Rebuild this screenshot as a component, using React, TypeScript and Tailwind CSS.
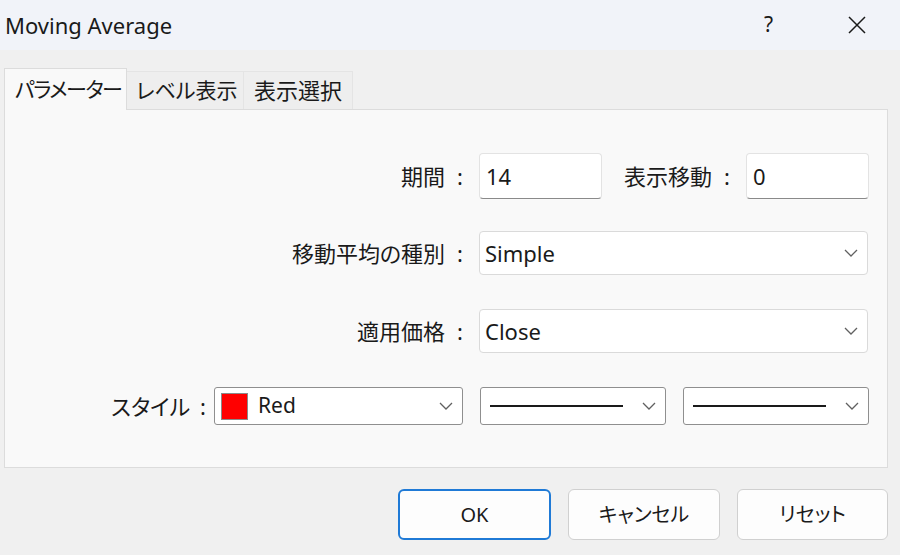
import React from "react";

function Chevron() {
  return (
    <svg width="14" height="8" viewBox="0 0 14 8" className="shrink-0">
      <path d="M1 1 L7 7 L13 1" fill="none" stroke="#606060" strokeWidth="1.3" />
    </svg>
  );
}

function TextBox({ value }: { value: string }) {
  return (
    <div className="w-[123px] h-[46px] bg-white border border-[#e3e3e3] border-b-[#8a8a8a] rounded-[4px] flex items-center pl-[6px] text-[22px] text-[#1a1a1a] shrink-0">
      {value}
    </div>
  );
}

function Select({ value }: { value: string }) {
  return (
    <div className="w-[389px] h-[44px] bg-white border border-[#dadada] rounded-[4px] flex items-center justify-between pl-[5px] pr-[9px] text-[22px] text-[#1a1a1a] shrink-0">
      <span>{value}</span>
      <Chevron />
    </div>
  );
}

function Colon() {
  return <span className="ml-[12px] mr-[16px]">:</span>;
}

function RowLabel({ children }: { children: React.ReactNode }) {
  return (
    <div className="w-[474px] text-right text-[22px] text-[#1a1a1a] whitespace-nowrap shrink-0">
      {children}
      <Colon />
    </div>
  );
}

export default function App() {
  return (
    <div className="w-[900px] h-[555px] bg-[#f0f0f0] flex flex-col overflow-hidden font-['Noto_Sans','Noto_Sans_CJK_JP',sans-serif] [font-feature-settings:'palt']">
      {/* title bar */}
      <div className="h-[50px] bg-[#f1f3f9] flex items-center shrink-0">
        <span className="ml-[5px] text-[22px] text-[#1a1a1a] flex-1">Moving Average</span>
        <span className="text-[21px] text-[#1a1a1a] mr-[74px]">?</span>
        <svg width="20" height="20" viewBox="0 0 20 20" className="mr-[33px]">
          <path d="M2 2 L18 18 M18 2 L2 18" stroke="#1a1a1a" strokeWidth="1.5" />
        </svg>
      </div>

      {/* tabs */}
      <div className="flex items-end pl-[4px] mt-[18px] h-[41px] shrink-0 relative z-10">
        <div className="w-[123px] h-[42px] bg-[#f9f9f9] border border-[#dcdcdc] border-b-0 flex items-center pl-[10px] text-[21px] tracking-[-1.5px] text-[#1a1a1a] whitespace-nowrap -mb-[1px]">
          パラメーター
        </div>
        <div className="w-[117px] h-[38px] bg-[#eeeeee] border border-[#e4e4e4] border-l-0 border-b-0 flex items-center pl-[9px] text-[21px] text-[#1a1a1a] whitespace-nowrap">
          レベル表示
        </div>
        <div className="w-[109px] h-[38px] bg-[#eeeeee] border border-[#e4e4e4] border-l-0 border-b-0 flex items-center pl-[10px] text-[22px] text-[#1a1a1a] whitespace-nowrap">
          表示選択
        </div>
      </div>

      {/* panel */}
      <div className="ml-[4px] w-[884px] h-[359px] bg-[#f9f9f9] border border-[#dcdcdc] shrink-0 flex flex-col pt-[43px] pr-[18px]">
        <div className="flex items-center">
          <RowLabel>期間</RowLabel>
          <TextBox value="14" />
          <div className="flex-1 text-right text-[22px] text-[#1a1a1a] whitespace-nowrap">
            表示移動
            <Colon />
          </div>
          <TextBox value="0" />
        </div>

        <div className="flex items-center mt-[32px]">
          <RowLabel>移動平均の種別</RowLabel>
          <Select value="Simple" />
        </div>

        <div className="flex items-center mt-[34px]">
          <RowLabel>適用価格</RowLabel>
          <Select value="Close" />
        </div>

        <div className="flex items-center justify-end mt-[34px]">
          <span className="text-[22px] text-[#1a1a1a] whitespace-nowrap">
            スタイル<span className="ml-[10px] mr-[8px]">:</span>
          </span>
          <div className="w-[249px] h-[38px] bg-white border border-[#8f8f8f] rounded-[3px] flex items-center pl-[6px] pr-[9px]">
            <div className="w-[27px] h-[27px] bg-[#ff0000] border border-[#8a8a8a] shrink-0" />
            <span className="ml-[10px] text-[21px] text-[#1a1a1a] flex-1">Red</span>
            <Chevron />
          </div>
          <div className="ml-[17px] w-[186px] h-[38px] bg-white border border-[#8f8f8f] rounded-[3px] flex items-center pl-[9px] pr-[9px] justify-between">
            <div className="w-[133px] h-[2px] bg-[#1a1a1a]" />
            <Chevron />
          </div>
          <div className="ml-[17px] w-[186px] h-[38px] bg-white border border-[#8f8f8f] rounded-[3px] flex items-center pl-[9px] pr-[9px] justify-between">
            <div className="w-[133px] h-[2px] bg-[#1a1a1a]" />
            <Chevron />
          </div>
        </div>
      </div>

      {/* buttons */}
      <div className="flex justify-end pr-[12px] mt-[21px] gap-[17px]">
        <div className="w-[153px] h-[51px] bg-[#fdfdfd] border-2 border-[#1f7ad6] rounded-[6px] flex items-center justify-center text-[20px] text-[#1a1a1a]">
          OK
        </div>
        <div className="w-[152px] h-[51px] bg-[#fdfdfd] border border-[#d0d0d0] rounded-[6px] flex items-center justify-center text-[20px] text-[#1a1a1a]">
          キャンセル
        </div>
        <div className="w-[151px] h-[51px] bg-[#fdfdfd] border border-[#d0d0d0] rounded-[6px] flex items-center justify-center text-[20px] text-[#1a1a1a]">
          リセット
        </div>
      </div>
    </div>
  );
}
